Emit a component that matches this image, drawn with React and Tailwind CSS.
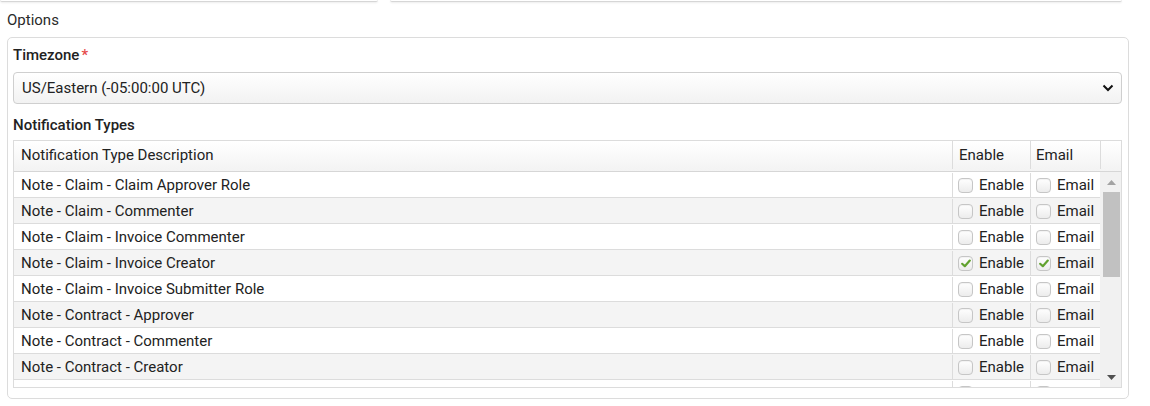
const rows = [
  { label: "Note - Claim - Claim Approver Role" },
  { label: "Note - Claim - Commenter" },
  { label: "Note - Claim - Invoice Commenter" },
  { label: "Note - Claim - Invoice Creator", checked: true },
  { label: "Note - Claim - Invoice Submitter Role" },
  { label: "Note - Contract - Approver" },
  { label: "Note - Contract - Commenter" },
  { label: "Note - Contract - Creator" },
  { label: "Note - Contract - Editor" },
];

function Check({ checked }) {
  return (
    <span className="flex h-[15px] w-[15px] shrink-0 items-center justify-center rounded-[4px] border border-[#c6c6c6] bg-gradient-to-b from-white to-[#ececec] shadow-[inset_0_1px_1px_rgba(0,0,0,0.05)]">
      {checked && (
        <svg width="10" height="9" viewBox="0 0 10 9">
          <path d="M1.2 4.8 L3.8 7.2 L8.8 1.6" fill="none" stroke="#62a22f" strokeWidth="2.2" strokeLinecap="round" strokeLinejoin="round" />
        </svg>
      )}
    </span>
  );
}

export default function App() {
  return (
    <div className="h-[406px] w-[1150px] overflow-hidden bg-white font-['Roboto',sans-serif] text-[15px] text-[#222]">
      <div className="flex gap-[12px] pr-[28px]">
        <div className="h-[2px] w-[378px] rounded-b-[3px] border-b border-[#d6d6d6] shadow-[0_1px_2px_rgba(0,0,0,0.08)]" />
        <div className="h-[2px] flex-1 rounded-b-[3px] border-b border-[#d6d6d6] shadow-[0_1px_2px_rgba(0,0,0,0.08)]" />
      </div>

      <div className="pl-[7px] pr-[21px]">
        <div className="pt-[9px] leading-[18px] text-[#2a2a2a]">Options</div>

        <div className="mt-[8px] h-[362px] rounded-[5px] border border-[#dcdcdc] pl-[5px] pr-[6px] pt-[8px]">
          <div className="font-medium leading-[18px]">
            Timezone<span className="ml-[2px] text-[#e64a4a]">*</span>
          </div>

          <div className="mt-[8px] flex h-[32px] items-center justify-between rounded-[4px] border border-[#cfcfcf] bg-gradient-to-b from-white to-[#f2f2f2] pl-[8px] pr-[7px]">
            <span>US/Eastern (-05:00:00 UTC)</span>
            <svg width="12" height="8" viewBox="0 0 12 8">
              <path d="M1.5 1.5 L6 6 L10.5 1.5" fill="none" stroke="#111" strokeWidth="2" />
            </svg>
          </div>

          <div className="mt-[12px] font-medium leading-[18px]">Notification Types</div>

          <div className="mt-[6px] border border-[#dcdcdc]">
            <div className="flex h-[31px] border-b border-[#d6d6d6] bg-gradient-to-b from-white to-[#f3f3f3] pb-[2px]">
              <div className="flex flex-1 items-center pl-[7px]">Notification Type Description</div>
              <div className="flex w-[78px] items-center border-l border-[#dcdcdc] pl-[6px]">Enable</div>
              <div className="flex w-[70px] items-center border-l border-[#dcdcdc] pl-[5px]">Email</div>
              <div className="w-[21px] border-l border-[#dcdcdc]" />
            </div>

            <div className="flex h-[215px]">
              <div className="flex-1 overflow-hidden">
                {rows.map((r, i) => (
                  <div
                    key={r.label}
                    className={`flex h-[26px] border-b border-[#dcdcdc] pt-[1px] ${i % 2 === 1 ? "bg-[#f4f4f4]" : "bg-white"}`}
                  >
                    <div className="flex flex-1 items-center pl-[7px]">{r.label}</div>
                    <div className="flex w-[78px] items-center gap-[6px] border-l border-[#dcdcdc] pl-[5px]">
                      <Check checked={r.checked} />
                      <span>Enable</span>
                    </div>
                    <div className="flex w-[70px] items-center gap-[6px] border-l border-[#dcdcdc] pl-[5px]">
                      <Check checked={r.checked} />
                      <span>Email</span>
                    </div>
                  </div>
                ))}
              </div>

              <div className="flex w-[21px] flex-col items-center bg-[#f1f1f1] pl-[1px]">
                <div className="flex h-[20px] w-full items-center justify-center">
                  <svg width="9" height="5" viewBox="0 0 9 5">
                    <path d="M0 5 L4.5 0 L9 5 Z" fill="#a3a3a3" />
                  </svg>
                </div>
                <div className="h-[85px] w-[17px] bg-[#c1c1c1]" />
                <div className="flex-1" />
                <div className="flex h-[20px] w-full items-center justify-center">
                  <svg width="9" height="5" viewBox="0 0 9 5">
                    <path d="M0 0 L9 0 L4.5 5 Z" fill="#505050" />
                  </svg>
                </div>
              </div>
            </div>
          </div>
        </div>
      </div>
    </div>
  );
}
